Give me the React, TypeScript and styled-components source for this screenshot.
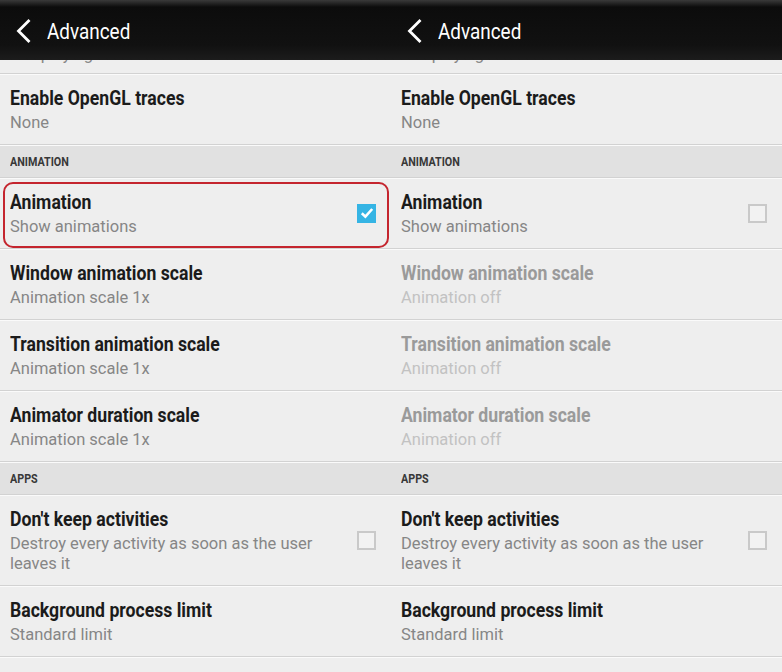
import React from 'react';
import styled, { createGlobalStyle, css } from 'styled-components';

type Item =
  | { kind: 'section'; label: string }
  | { kind: 'row'; title: string; sub: string; check?: boolean; checked?: boolean; disabled?: boolean; marked?: boolean };

const buildItems = (enabled: boolean): Item[] => [
  { kind: 'row', title: 'Enable OpenGL traces', sub: 'None' },
  { kind: 'section', label: 'ANIMATION' },
  { kind: 'row', title: 'Animation', sub: 'Show animations', check: true, checked: enabled, marked: enabled },
  { kind: 'row', title: 'Window animation scale', sub: enabled ? 'Animation scale 1x' : 'Animation off', disabled: !enabled },
  { kind: 'row', title: 'Transition animation scale', sub: enabled ? 'Animation scale 1x' : 'Animation off', disabled: !enabled },
  { kind: 'row', title: 'Animator duration scale', sub: enabled ? 'Animation scale 1x' : 'Animation off', disabled: !enabled },
  { kind: 'section', label: 'APPS' },
  { kind: 'row', title: "Don't keep activities", sub: 'Destroy every activity as soon as the user leaves it', check: true },
  { kind: 'row', title: 'Background process limit', sub: 'Standard limit' },
];

const Screen = ({ enabled }: { enabled: boolean }) => (
  <Panel>
    <Header>
      <BackIcon width="16" height="24" viewBox="0 0 16 24">
        <path d="M13.5 2 L3.5 12 L13.5 22" fill="none" stroke="#fff" strokeWidth="2.8" strokeLinecap="square" />
      </BackIcon>
      <HeaderTitle>Advanced</HeaderTitle>
    </Header>
    <List>
      <CutRow>
        <Sub>Not playing</Sub>
      </CutRow>
      {buildItems(enabled).map((item, i) =>
        item.kind === 'section' ? (
          <Section key={i}>
            <SectionLabel>{item.label}</SectionLabel>
          </Section>
        ) : (
          <Row key={i}>
            <Texts>
              <Title $disabled={item.disabled}>{item.title}</Title>
              <Sub $disabled={item.disabled}>{item.sub}</Sub>
            </Texts>
            {item.check && (
              <CheckBox $checked={item.checked}>
                {item.checked && (
                  <svg width="14" height="12" viewBox="0 0 14 12">
                    <path d="M1.8 6.2 L5.4 9.6 L12.2 2" fill="none" stroke="#fff" strokeWidth="2.6" />
                  </svg>
                )}
              </CheckBox>
            )}
            {item.marked && <Highlight />}
          </Row>
        )
      )}
      <Row />
    </List>
  </Panel>
);

export default function App() {
  return (
    <>
      <GlobalStyle />
      <Screens>
        <Screen enabled />
        <Screen enabled={false} />
      </Screens>
    </>
  );
}

const GlobalStyle = createGlobalStyle`
  html, body {
    margin: 0;
    padding: 0;
    background: #eeeeee;
  }
  body {
    font-family: Roboto, "Liberation Sans", sans-serif;
    overflow: hidden;
  }
`;

// no condensed face installed, so squeeze Roboto horizontally
const condensed = css`
  font-family: Roboto, "Liberation Sans", sans-serif;
  transform: scaleX(0.86);
  transform-origin: left center;
  white-space: nowrap;
`;

const Screens = styled.div`
  display: flex;
  width: 782px;
  height: 672px;
  overflow: hidden;
`;

const Panel = styled.div`
  flex: 0 0 391px;
  display: flex;
  flex-direction: column;
  overflow: hidden;
  background: #eeeeee;
`;

const Header = styled.div`
  height: 60px;
  flex: none;
  display: flex;
  align-items: center;
  gap: 16px;
  padding: 2px 0 0 15px;
  box-sizing: border-box;
  background: linear-gradient(180deg, #3a3a3a 0px, #0c0c0c 7px, #111111 45px, #1c1c1c 60px);
`;

const BackIcon = styled.svg`
  flex: none;
`;

const HeaderTitle = styled.span`
  ${condensed}
  color: #ffffff;
  font-size: 22.5px;
  font-weight: 400;
  transform: scaleX(0.84);
`;

const List = styled.div`
  display: flex;
  flex-direction: column;
  flex: none;
`;

const separator = css`
  flex: none;
  border-bottom: 1px solid #d2d2d2;
  box-shadow: 0 1px 0 #fafafa;
  margin-bottom: 1px;
`;

const CutRow = styled.div`
  height: 13px;
  overflow: hidden;
  display: flex;
  align-items: flex-end;
  padding: 0 10px;
  ${separator}
  & > div {
    margin-bottom: 8px;
  }
`;

const Row = styled.div`
  position: relative;
  display: flex;
  align-items: center;
  min-height: 48px;
  padding: 10px 15px 11px 10px;
  ${separator}
`;

const Texts = styled.div`
  flex: 1;
  min-width: 0;
  padding-right: 30px;
`;

const Title = styled.div<{ $disabled?: boolean }>`
  ${condensed}
  font-weight: 700;
  font-size: 20.5px;
  line-height: 26px;
  color: ${(p) => (p.$disabled ? '#9a9a9a' : '#1b1b1b')};
`;

const Sub = styled.div<{ $disabled?: boolean }>`
  font-size: 16.5px;
  line-height: 20px;
  margin-top: 2px;
  color: ${(p) => (p.$disabled ? '#c2c2c2' : '#868686')};
`;

const Section = styled.div`
  height: 31px;
  display: flex;
  align-items: center;
  padding-left: 10px;
  background: #e1e1e1;
  ${separator}
`;

const SectionLabel = styled.span`
  ${condensed}
  font-weight: 700;
  font-size: 12.5px;
  color: #383838;
`;

const CheckBox = styled.div<{ $checked?: boolean }>`
  flex: none;
  width: 19px;
  height: 19px;
  box-sizing: border-box;
  display: flex;
  align-items: center;
  justify-content: center;
  ${(p) =>
    p.$checked
      ? css`
          background: #35b4e4;
        `
      : css`
          border: 2px solid #c9c9c9;
          background: #f2f2f2;
        `}
`;

const Highlight = styled.div`
  position: absolute;
  top: 3px;
  left: 3px;
  right: 2px;
  bottom: 0;
  border: 2px solid #c4252e;
  border-radius: 10px;
  pointer-events: none;
`;
